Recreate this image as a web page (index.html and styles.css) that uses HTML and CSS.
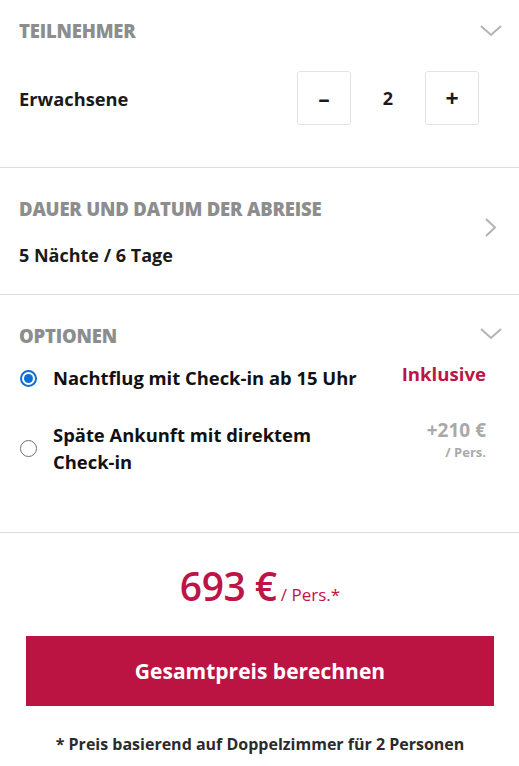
FILE: index.html
```html
<!DOCTYPE html>
<html lang="de">
<head>
<meta charset="utf-8">
<link rel="stylesheet" href="styles.css">
</head>
<body>
<div class="panel">
  <section class="sec sec-participants">
    <div class="sec-head">
      <h2 class="sec-title">Teilnehmer</h2>
      <svg class="chev-down" width="22" height="12" viewBox="0 0 22 12"><path d="M1 1 L11 10 L21 1" fill="none" stroke="#b3b3b3" stroke-width="2"/></svg>
    </div>
    <div class="counter-row">
      <span class="label">Erwachsene</span>
      <div class="counter">
        <button class="step">&#8211;</button>
        <span class="count">2</span>
        <button class="step">+</button>
      </div>
    </div>
  </section>

  <section class="sec sec-duration">
    <div class="duration-text">
      <h2 class="sec-title">Dauer und Datum der Abreise</h2>
      <div class="value">5 Nächte / 6 Tage</div>
    </div>
    <svg class="chev-right" width="12" height="19" viewBox="0 0 12 19"><path d="M1 1 L10 9.5 L1 18" fill="none" stroke="#b3b3b3" stroke-width="2"/></svg>
  </section>

  <section class="sec sec-options">
    <div class="sec-head">
      <h2 class="sec-title">Optionen</h2>
      <svg class="chev-down" width="22" height="12" viewBox="0 0 22 12"><path d="M1 1 L11 10 L21 1" fill="none" stroke="#b3b3b3" stroke-width="2"/></svg>
    </div>
    <div class="option opt-1">
      <span class="radio checked"></span>
      <span class="opt-label">Nachtflug mit Check-in ab 15 Uhr</span>
      <span class="opt-price incl">Inklusive</span>
    </div>
    <div class="option opt-2">
      <span class="radio"></span>
      <span class="opt-label">Späte Ankunft mit direktem<br>Check-in</span>
      <span class="opt-price extra"><span class="amt">+210 €</span><span class="per">/ Pers.</span></span>
    </div>
  </section>

  <section class="summary">
    <div class="price"><span class="big">693 €</span> <span class="unit">/ Pers.*</span></div>
    <button class="cta">Gesamtpreis berechnen</button>
    <p class="note">* Preis basierend auf Doppelzimmer für 2 Personen</p>
  </section>
</div>
</body>
</html>
```

FILE: styles.css
```css
* { box-sizing: border-box; }
html, body { margin: 0; padding: 0; background: #fff; }
body {
  font-family: "Open Sans", "Noto Sans", sans-serif;
  color: #111;
  width: 519px;
}
.sec {
  border-bottom: 1px solid #dcdcdc;
  padding: 0 19px;
}
.sec-title {
  margin: 0;
  font-size: 18.5px;
  line-height: 22px;
  font-weight: 800;
  text-transform: uppercase;
  color: #8d8d8d;
  letter-spacing: -0.2px;
}
.sec-head {
  display: flex;
  justify-content: space-between;
  align-items: center;
}
.chev-down { margin-right: -2px; }

.sec-participants { padding-top: 20px; height: 168px; }
.counter-row {
  margin-top: 29px;
  display: flex;
  align-items: center;
  justify-content: space-between;
  height: 54px;
}
.label { font-size: 18.3px; font-weight: 700; color: #1a1a1a; }
.counter { display: flex; align-items: center; margin-right: 21px; }
.step {
  width: 54px; height: 54px;
  border: 1px solid #e3e3e3;
  border-radius: 3px;
  background: #fff;
  font-family: inherit;
  font-size: 23px;
  font-weight: 700;
  color: #1a1a1a;
  padding: 0;
  line-height: 1;
}
.count { width: 74px; text-align: center; font-size: 18px; font-weight: 700; color: #1a1a1a; }

.sec-duration {
  display: flex;
  justify-content: space-between;
  align-items: center;
  padding-top: 30px;
  padding-bottom: 28px;
  height: 127px;
}
.value { margin-top: 24px; font-size: 18px; line-height: 22px; font-weight: 700; color: #1a1a1a; }
.chev-right { margin-right: 3px; margin-top: -10px; }

.sec-options { padding-top: 30px; height: 238px; }
.sec-options .sec-head .chev-down { margin-top: -4px; }
.option {
  display: flex;
  align-items: center;
  padding-right: 14px;
}
.opt-1 { margin-top: 20px; }
.opt-2 { margin-top: 32px; }
.radio {
  width: 17px; height: 17px;
  border-radius: 50%;
  border: 1.5px solid #6f6f6f;
  flex: none;
  margin-left: 1px;
  position: relative;
}
.radio.checked { border: 2px solid #0b6fd6; }
.radio.checked::after {
  content: "";
  position: absolute;
  left: 2px; top: 2px;
  width: 9px; height: 9px;
  border-radius: 50%;
  background: #0b6fd6;
}
.opt-label {
  margin-left: 16px;
  flex: 1;
  font-size: 18.4px;
  line-height: 27px;
  font-weight: 700;
  color: #111;
}
.opt-1 .opt-label { line-height: 22px; }
.opt-price { text-align: right; font-weight: 700; }
.incl { color: #bc1546; font-size: 18.6px; align-self: flex-start; margin-top: -6px; }
.extra { align-self: flex-start; display: flex; flex-direction: column; color: #a9a9a9; margin-top: -1px; }
.amt { display: block; font-size: 19px; line-height: 20px; }
.per { display: block; font-size: 13px; line-height: 13px; margin-top: 6px; }

.summary {
  display: flex;
  flex-direction: column;
  align-items: center;
  padding: 27px 25px 0 26px;
}
.price { color: #bc1546; white-space: nowrap; }
.big { font-size: 39px; font-weight: 600; line-height: 52px; letter-spacing: -0.5px; }
.unit { font-size: 17px; font-weight: 400; }
.cta {
  margin-top: 24px;
  width: 100%;
  height: 70px;
  background: #bb1443;
  border: none;
  color: #fff;
  font-family: inherit;
  font-size: 21px;
  font-weight: 700;
}
.note {
  margin: 27px 0 0;
  font-size: 16px;
  font-weight: 700;
  color: #2b2b2b;
}
```
